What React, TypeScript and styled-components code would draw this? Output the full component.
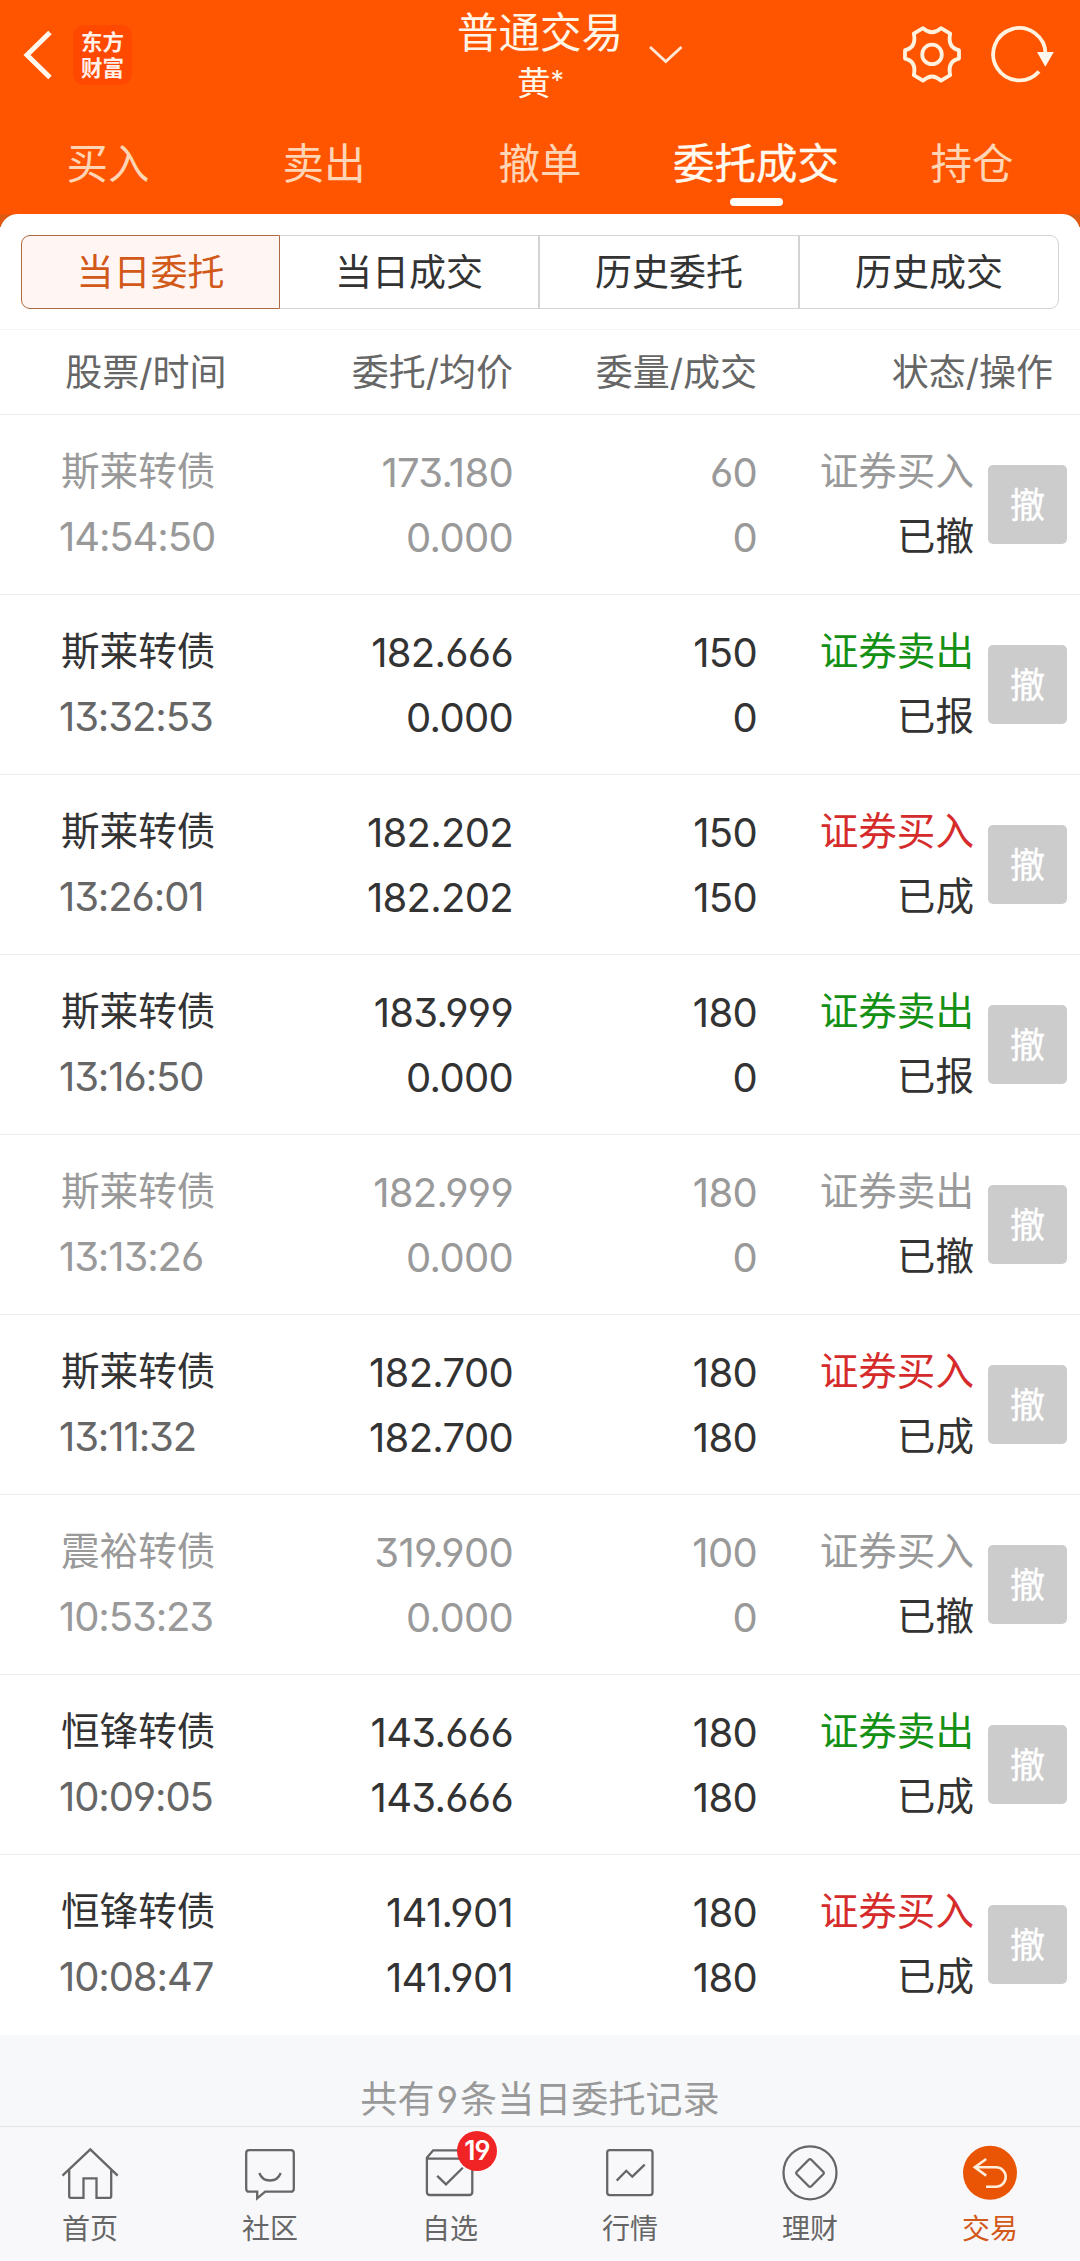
import React from "react";
import styled, { createGlobalStyle } from "styled-components";

const GlobalStyle = createGlobalStyle`
  * { box-sizing: border-box; }
  body {
    margin: 0;
    background: #f7f8fa;
    font-family: "Inter", "Noto Sans CJK SC", sans-serif;
    font-feature-settings: "cv03", "cv04", "cv09";
    color: #333;
  }
  button { font: inherit; font-feature-settings: inherit; color: inherit; border: 0; background: none; padding: 0; margin: 0; }
  svg { display: block; }
`;

const Screen = styled.div`
  width: 1080px;
  height: 2261px;
  display: flex;
  flex-direction: column;
  overflow: hidden;
`;

const Header = styled.header`
  height: 214px;
  flex: none;
  background: #ff5500;
  display: flex;
  flex-direction: column;
`;

const TitleBar = styled.div`
  height: 114px;
  display: grid;
  grid-template-columns: 455px 170px 455px;
`;

const BarStart = styled.div`
  display: flex;
  align-items: flex-start;
  padding: 25px 0 0 18px;
  gap: 15px;
`;

const Logo = styled.div`
  width: 59px;
  height: 60px;
  border-radius: 11px;
  background: #ff4800;
  color: #fff1ea;
  font-family: "Noto Sans CJK SC", sans-serif;
  font-weight: 700;
  font-size: 21.5px;
  padding-top: 3px;
  display: flex;
  flex-direction: column;
  align-items: center;
`;

const LogoLine = styled.div`
  height: 26px;
  line-height: 26px;
`;

const TitleBlock = styled.div`
  display: flex;
  flex-direction: column;
  align-items: center;
  white-space: nowrap;
  color: #fff6e8;
`;

const Title = styled.div`
  font-size: 41.5px;
  line-height: 64px;
  height: 64px;
  padding-top: 1px;
`;

const Subtitle = styled.div`
  display: flex;
  font-size: 33.5px;
  line-height: 39px;
  padding-left: 1px;
`;

const Mask = styled.span`
  font-size: 27px;
  line-height: 34px;
`;

const BarEnd = styled.div`
  display: flex;
  align-items: flex-start;
  padding: 25px 26px 0 22px;
  svg + svg { margin-left: auto; }
  svg + svg + svg { margin-left: 28px; }
`;

const NavTabs = styled.nav`
  height: 100px;
  display: grid;
  grid-template-columns: repeat(5, 1fr);
`;

const NavTab = styled.button<{ $active?: boolean }>`
  display: flex;
  flex-direction: column;
  align-items: center;
  white-space: nowrap;
  font-size: 41.5px;
  line-height: 60px;
  padding-top: 20px;
  color: ${(p) => (p.$active ? "#fffaf0" : "#ffd5b5")};
  -webkit-text-stroke: ${(p) => (p.$active ? "0.35px #fffaf0" : "0")};
  &::after {
    content: "";
    width: 53px;
    height: 8px;
    margin-top: 4px;
    border-radius: 4px;
    background: ${(p) => (p.$active ? "#fffdf8" : "transparent")};
  }
`;

const SheetBack = styled.div`
  flex: none;
  background: linear-gradient(#df5a10 0 13px, #fff 13px);
`;

const Sheet = styled.main`
  background: #fff;
  border-radius: 18px 18px 0 0;
`;

const Segments = styled.div`
  height: 115px;
  padding: 21px 21px 0;
  display: grid;
  grid-template-columns: 259px 259px 260px 260px;
`;

const Segment = styled.button<{ $active?: boolean }>`
  height: 74px;
  border: 1px solid ${(p) => (p.$active ? "#ad6b42" : "#d3d3d6")};
  background: ${(p) => (p.$active ? "#fff6f3" : "#fff")};
  color: ${(p) => (p.$active ? "#d2591a" : "#333")};
  font-size: 37px;
  line-height: 72px;
  padding-top: 1px;
  &:first-child { border-radius: 9px 0 0 9px; }
  &:first-child + & { border-left: 0; }
  &:last-child { border-radius: 0 9px 9px 0; }
`;

const ColumnHeads = styled.div`
  height: 86px;
  border-top: 1px solid #f4f4f4;
  border-bottom: 1px solid #ebebeb;
  display: grid;
  grid-template-columns: 226.5px 286.5px 244px 296px;
  font-size: 37px;
  line-height: 85px;
  color: #666;
  text-align: right;
  white-space: nowrap;
`;

const Order = styled.article`
  height: 180px;
  padding-top: 24px;
  border-bottom: 1px solid #ececec;
  display: grid;
  grid-template-columns: 61px 200px 252px 244px 217px 79px;
  font-size: 38.6px;
  line-height: 65px;
  white-space: nowrap;
  &:last-child { border-bottom-color: #fff; }
`;

const Cell = styled.div<{ $start?: boolean; $number?: boolean }>`
  display: flex;
  flex-direction: column;
  padding-top: ${(p) => (p.$number ? "1px" : "0")};
  text-align: ${(p) => (p.$start ? "left" : "right")};
  font-size: ${(p) => (p.$number ? "40px" : "inherit")};
  letter-spacing: ${(p) => (p.$number ? "-0.7px" : "0")};
`;

const Line = styled.span<{ $color: string }>`
  height: 65px;
  color: ${(p) => p.$color};
`;

const Time = styled(Line)`
  font-size: 40px;
  letter-spacing: -1.1px;
  margin-left: -2px;
`;

const Cancel = styled.button`
  width: 79px;
  height: 79px;
  margin: 26px 0 0 14px;
  border-radius: 5px;
  background: #ccc;
  color: #fff;
  font-size: 35px;
  -webkit-text-stroke: 0.4px #fff;
  line-height: 76px;
`;

const Summary = styled.div`
  flex: 1;
  padding-top: 44px;
  text-align: center;
  font-size: 37.1px;
  line-height: 42px;
  color: #999;
`;

const Count = styled.span`
  margin: 0 2px;
`;

const BottomBar = styled.footer`
  height: 135px;
  flex: none;
  border-top: 1px solid #e2e3e5;
  background: #f8f8fa;
  display: grid;
  grid-template-columns: repeat(6, 1fr);
`;

const BottomItem = styled.button<{ $active?: boolean }>`
  display: flex;
  flex-direction: column;
  align-items: center;
  padding-top: 16px;
  font-size: 28px;
  line-height: 44px;
  color: ${(p) => (p.$active ? "#d2591a" : "#666")};
`;

const IconBox = styled.span`
  position: relative;
  width: 60px;
  height: 60px;
`;

const Badge = styled.span`
  position: absolute;
  left: 37px;
  top: -12px;
  width: 40px;
  height: 40px;
  border-radius: 50%;
  background: #f02424;
  color: #fff;
  font-size: 26.5px;
  font-weight: 600;
  line-height: 38px;
  letter-spacing: -0.8px;
  text-align: center;
`;

const Label = styled.span`
  margin-top: 4px;
`;

const BackIcon = () => (
  <svg width="40" height="60" viewBox="0 0 40 60" fill="none" stroke="#fff8ee" strokeWidth="5">
    <path d="M32 7.5 L9 30 L32 52.5" />
  </svg>
);

const ChevronIcon = () => (
  <svg width="38" height="60" viewBox="0 0 38 60" fill="none" stroke="#ffe9d6" strokeWidth="2.8">
    <path d="M3 22 L18.8 36.5 L34.5 22" />
  </svg>
);

const GearIcon = () => (
  <svg width="60" height="60" viewBox="0 0 60 60" fill="none" stroke="#fff2df" strokeWidth="3.8" strokeLinejoin="round">
    <path d="M21 3.2 Q30 11.5 39 3.2 L48.2 8.6 Q45.2 22.5 57 25.2 V33.6 Q45.2 36.3 48.2 50.2 L39 55.6 Q30 47.3 21 55.6 L11.8 50.2 Q14.8 36.3 3 33.6 V25.2 Q14.8 22.5 11.8 8.6 Z" />
    <circle cx="30" cy="29.4" r="9.8" />
  </svg>
);

const RefreshIcon = () => (
  <svg width="64" height="60" viewBox="0 0 64 60" fill="none" stroke="#fff2df" strokeWidth="3.8">
    <path d="M55.6 29 A26.2 26.2 0 1 0 49 46.6" />
    <path d="M47 27 H63.8 L55.3 41.8 Z" fill="#fff8ee" stroke="none" />
  </svg>
);

const glyph = {
  width: 60,
  height: 60,
  viewBox: "0 0 60 60",
  fill: "none",
  stroke: "#666",
  strokeWidth: 2.3,
} as const;

const HomeIcon = () => (
  <svg {...glyph}>
    <path d="M2.5 32.6 L30.3 6.3 L57.7 32.6 M9.2 26.5 V53.2 Q9.2 54.8 10.8 54.8 H23.5 V35.3 H36.5 V54.8 H49.6 Q51.2 54.8 51.2 53.2 V26.5" />
  </svg>
);

const CommunityIcon = () => (
  <svg {...glyph}>
    <path d="M9.2 7.1 H50.8 Q53.8 7.1 53.8 10.1 V45.7 Q53.8 48.7 50.8 48.7 H25.2 L17.2 55.4 V48.7 H9.2 Q6.2 48.7 6.2 45.7 V10.1 Q6.2 7.1 9.2 7.1 Z" />
    <path d="M19.3 30 C23 40 37 40 40.7 30" />
  </svg>
);

const WatchlistIcon = () => (
  <svg {...glyph}>
    <path d="M6.9 15.7 H52.3 V49 Q52.3 52 49.3 52 H9.9 Q6.9 52 6.9 49 V14.7 L13.2 7.3 H46 L52.3 15.7" />
    <path d="M17.2 32.8 L26 41.3 L42.8 24.8" />
  </svg>
);

const MarketIcon = () => (
  <svg {...glyph}>
    <rect x="7.2" y="7.1" width="45.3" height="45" rx="2.5" />
    <path d="M16.7 37.6 L26.3 27.8 L32.3 33.7 L44.7 21.7" />
  </svg>
);

const FinanceIcon = () => (
  <svg {...glyph} strokeLinejoin="round">
    <circle cx="30" cy="29.8" r="26.5" />
    <path d="M28.7 16.8 Q30 15.5 31.3 16.8 L43.2 28.7 Q44.4 30 43.2 31.3 L31.3 43.2 Q30 44.5 28.7 43.2 L16.8 31.3 Q15.6 30 16.8 28.7 Z" />
  </svg>
);

const TradeIcon = () => (
  <svg {...glyph} stroke="#ffeedb" strokeWidth={2.6}>
    <circle cx="30" cy="29.8" r="27" fill="#e95504" stroke="none" />
    <path d="M26.2 16 L14.8 24.3 L26.2 32.6 M14.8 24.3 H36 A9.7 9.7 0 0 1 36 43.7 H26" />
  </svg>
);

const GREY = "#999";
const DARK = "#333";
const GREEN = "#149014";
const RED = "#d52b2b";

type OrderData = {
  name: string;
  time: string;
  price: string;
  avg: string;
  qty: string;
  filled: string;
  side: "buy" | "sell";
  status: string;
};

const orders: OrderData[] = [
  { name: "斯莱转债", time: "14:54:50", price: "173.180", avg: "0.000", qty: "60", filled: "0", side: "buy", status: "已撤" },
  { name: "斯莱转债", time: "13:32:53", price: "182.666", avg: "0.000", qty: "150", filled: "0", side: "sell", status: "已报" },
  { name: "斯莱转债", time: "13:26:01", price: "182.202", avg: "182.202", qty: "150", filled: "150", side: "buy", status: "已成" },
  { name: "斯莱转债", time: "13:16:50", price: "183.999", avg: "0.000", qty: "180", filled: "0", side: "sell", status: "已报" },
  { name: "斯莱转债", time: "13:13:26", price: "182.999", avg: "0.000", qty: "180", filled: "0", side: "sell", status: "已撤" },
  { name: "斯莱转债", time: "13:11:32", price: "182.700", avg: "182.700", qty: "180", filled: "180", side: "buy", status: "已成" },
  { name: "震裕转债", time: "10:53:23", price: "319.900", avg: "0.000", qty: "100", filled: "0", side: "buy", status: "已撤" },
  { name: "恒锋转债", time: "10:09:05", price: "143.666", avg: "143.666", qty: "180", filled: "180", side: "sell", status: "已成" },
  { name: "恒锋转债", time: "10:08:47", price: "141.901", avg: "141.901", qty: "180", filled: "180", side: "buy", status: "已成" },
];

const OrderRow = ({ order }: { order: OrderData }) => {
  const cancelled = order.status === "已撤";
  const main = cancelled ? GREY : DARK;
  const sideColor = cancelled ? GREY : order.side === "buy" ? RED : GREEN;
  return (
    <Order>
      <span />
      <Cell $start>
        <Line $color={main}>{order.name}</Line>
        <Time $color={cancelled ? GREY : "#666"}>{order.time}</Time>
      </Cell>
      <Cell $number>
        <Line $color={main}>{order.price}</Line>
        <Line $color={main}>{order.avg}</Line>
      </Cell>
      <Cell $number>
        <Line $color={main}>{order.qty}</Line>
        <Line $color={main}>{order.filled}</Line>
      </Cell>
      <Cell>
        <Line $color={sideColor}>{order.side === "buy" ? "证券买入" : "证券卖出"}</Line>
        <Line $color={DARK}>{order.status}</Line>
      </Cell>
      <Cancel>撤</Cancel>
    </Order>
  );
};

const navTabs = ["买入", "卖出", "撤单", "委托成交", "持仓"];
const segments = ["当日委托", "当日成交", "历史委托", "历史成交"];
const heads = ["股票/时间", "委托/均价", "委量/成交", "状态/操作"];
const bottomItems = [
  { label: "首页", Icon: HomeIcon },
  { label: "社区", Icon: CommunityIcon },
  { label: "自选", Icon: WatchlistIcon, badge: "19" },
  { label: "行情", Icon: MarketIcon },
  { label: "理财", Icon: FinanceIcon },
  { label: "交易", Icon: TradeIcon, active: true },
];

export default function App() {
  return (
    <Screen>
      <GlobalStyle />
      <Header>
        <TitleBar>
          <BarStart>
            <BackIcon />
            <Logo>
              <LogoLine>东方</LogoLine>
              <LogoLine>财富</LogoLine>
            </Logo>
          </BarStart>
          <TitleBlock>
            <Title>普通交易</Title>
            <Subtitle>
              黄<Mask>*</Mask>
            </Subtitle>
          </TitleBlock>
          <BarEnd>
            <ChevronIcon />
            <GearIcon />
            <RefreshIcon />
          </BarEnd>
        </TitleBar>
        <NavTabs>
          {navTabs.map((t) => (
            <NavTab key={t} $active={t === "委托成交"}>
              {t}
            </NavTab>
          ))}
        </NavTabs>
      </Header>
      <SheetBack>
        <Sheet>
          <Segments>
            {segments.map((s, i) => (
              <Segment key={s} $active={i === 0}>
                {s}
              </Segment>
            ))}
          </Segments>
          <ColumnHeads>
            {heads.map((h) => (
              <span key={h}>{h}</span>
            ))}
          </ColumnHeads>
          <section>
            {orders.map((o) => (
              <OrderRow key={o.time} order={o} />
            ))}
          </section>
        </Sheet>
      </SheetBack>
      <Summary>
        共有<Count>{orders.length}</Count>条当日委托记录
      </Summary>
      <BottomBar>
        {bottomItems.map(({ label, Icon, badge, active }) => (
          <BottomItem key={label} $active={active}>
            <IconBox>
              <Icon />
              {badge && <Badge>{badge}</Badge>}
            </IconBox>
            <Label>{label}</Label>
          </BottomItem>
        ))}
      </BottomBar>
    </Screen>
  );
}
